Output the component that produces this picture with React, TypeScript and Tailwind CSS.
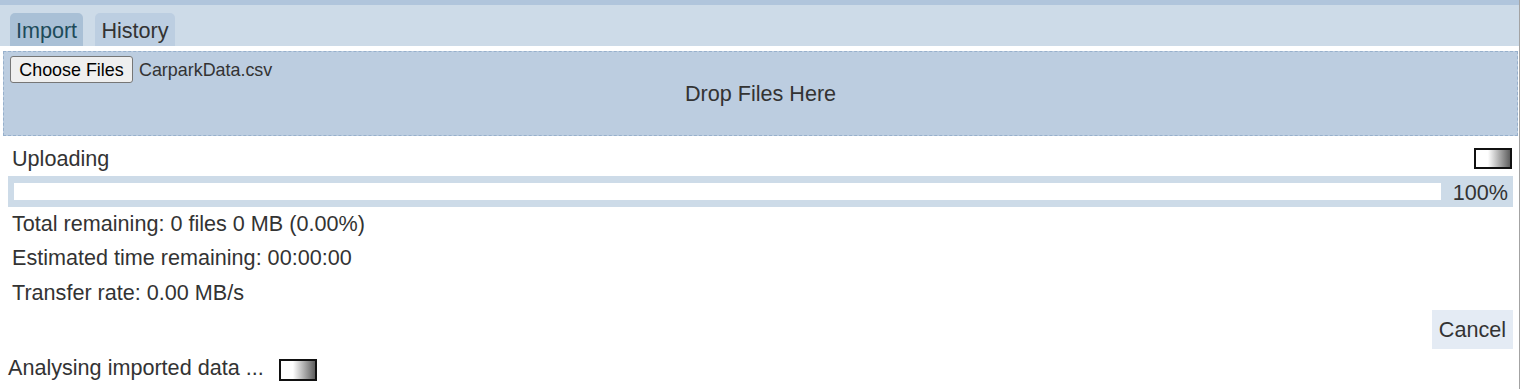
export default function App() {
  const font = "font-['Liberation_Sans',Arial,Helvetica,sans-serif]";
  return (
    <div className={`${font} w-[1520px] min-h-[389px] border-r border-[#a3a3a3] bg-white text-[#333]`}>
      <div className="h-[5px] bg-[#b0c5dc]" />
      <div className="flex h-[41px] items-end gap-[12px] bg-[#cddbe8] pl-[10px]">
        <div className="h-[33px] w-[73px] rounded-t-[5px] bg-[#a9c0d6] pt-[6px] text-center text-[21.6px] leading-[24px] text-[#1d4b5a]">
          Import
        </div>
        <div className="h-[33px] w-[80px] rounded-t-[5px] bg-[#bccee1] pt-[6px] text-center text-[21.6px] leading-[24px] text-[#333]">
          History
        </div>
      </div>

      <div className="ml-[3px] mr-[1px] mt-[5px] grid h-[85px] border border-dashed border-[#97b0cc] bg-[#bccde0]">
        <div className="col-start-1 row-start-1 flex items-center self-start pl-[6px] pt-[4px]">
          <button className="h-[27px] w-[123px] rounded-[3px] border border-[#767676] bg-[#efefef] text-[17.9px] leading-[20px] text-black">
            Choose Files
          </button>
          <span className="ml-[6px] text-[17.9px] leading-[20px] text-[#333]">CarparkData.csv</span>
        </div>
        <div className="col-start-1 row-start-1 self-center justify-self-center text-[21.6px] leading-[24px]">
          Drop Files Here
        </div>
      </div>

      <div className="ml-[8px] mr-[6px] mt-[11px]">
        <div className="flex items-start justify-between pl-[4px] pr-[1px]">
          <span className="text-[21.6px] leading-[24px]">Uploading</span>
          <div className="mt-[1px] h-[21px] w-[38px] border-2 border-[#111] bg-[linear-gradient(to_right,#ffffff_0%,#ffffff_35%,#5e5e5e_100%)]" />
        </div>

        <div className="mt-[5px] flex h-[31px] items-start bg-[#cddbe8] pl-[6px] pr-[5px]">
          <div className="mt-[7px] h-[17px] flex-1 bg-white" />
          <span className="ml-[12px] pt-[5px] text-[21.6px] leading-[24px]">100%</span>
        </div>

        <div className="mt-[4.5px] flex flex-col gap-[10.5px] pl-[4px] text-[21.6px] leading-[24px]">
          <div>Total remaining: 0 files 0 MB (0.00%)</div>
          <div>Estimated time remaining: 00:00:00</div>
          <div>Transfer rate: 0.00 MB/s</div>
        </div>

        <div className="mt-[5.5px] flex justify-end">
          <button className="h-[39px] bg-[#e4ebf4] px-[7px] pb-[7px] pt-[8px] text-[21.6px] leading-[24px] text-[#333]">
            Cancel
          </button>
        </div>
      </div>

      <div className="mt-[6.5px] flex items-start pl-[8px]">
        <span className="text-[21.6px] leading-[24px]">Analysing imported data ...</span>
        <div className="ml-[15px] mt-[3px] h-[22px] w-[38px] border-2 border-[#111] bg-[linear-gradient(to_right,#ffffff_0%,#ffffff_35%,#5e5e5e_100%)]" />
      </div>
    </div>
  );
}
